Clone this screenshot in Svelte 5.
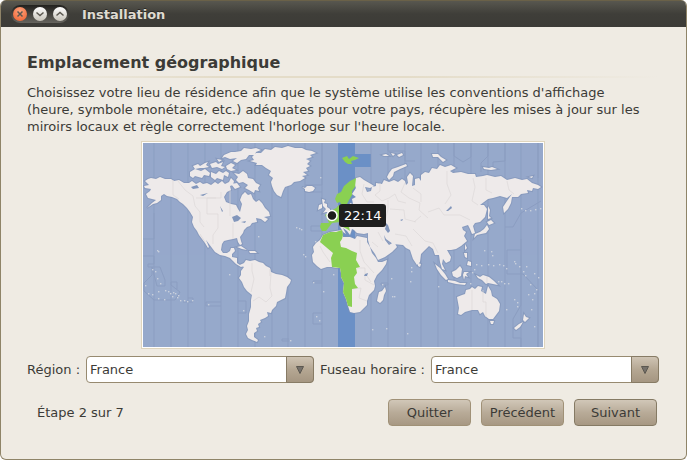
<script>
    let region = $state('France');
    let timezone = $state('France');
    let time = $state('22:14');

    const regions = ['France', 'Belgique', 'Suisse', 'Canada'];

    // timezone boundaries, one every 15 degrees
    const zoneLines = [11, 28, 45, 62, 78, 95, 112, 129, 145, 162, 179, 228, 245, 262, 278, 295, 311, 328, 345, 362, 378, 395];

    const zoneBoxes = [
        'M0 113H11V121H5V124H9V132L1 140V148L11 157H32L37 149L28 142V139H34V146',
        'M9 124L17 124L22 137V143H14Z',
        'M45 155H50V159H40',
        'M78 159H63V163H78',
        'M179 0V42H162',
        'M162 49H179',
        'M179 83H168V88H179',
        'M179 138H170V140H179',
        'M179 170H170V181H179',
        'M146 196H139V198H146',
        'M95 158H103V170H95',
        'M238 140H245V142H238Z',
        'M245 0V8H262V18H272',
        'M311 0V13L320 19L328 14V0',
        'M345 0V13L338 20V29',
        'M362 0V18L350 19V27',
        'M395 0V35M398 58L378 70L370 84H362',
        'M378 96L378 107H364V131H380L395 147V204',
        'M378 107V162L370 176V195H378V204',
        'M0 96H11V70'
    ];

    const land = [
        // North America
        'M2 38L5 36L8 35L13 36L17 34L22 36L28 36L31 38L36 37L41 40L46 40L49 38L53 41L57 39L60 41L64 40L68 42L72 39L75 41L79 38L82 41L86 39L88 35L91 38L90 42L87 43L88 47L84 49L81 54L83 59L88 61L93 62L95 66L97 69L98 65L99 61L97 57L99 52L102 49L105 52L108 51L110 56L113 59L116 57L119 60L122 65L126 69L127 73L121 74L125 76L122 79L118 76L113 75L114 79L109 80L107 83L104 84L101 87L100 90L97 94L98 98L99 101L97 102L95 99L94 95L90 96L85 97L81 98L79 101L78 107L80 110L84 110L87 108L88 105L91 105L92 108L89 111L89 114L94 115L94 120L97 122L101 121L101 123L98 124L93 121L90 118L87 115L82 113L77 112L72 109L69 105L66 101L63 97L66 104L65 105L62 100L59 96L56 92L54 88L51 84L49 79L50 74L47 69L44 65L40 61L37 59L34 56L29 54L24 53L21 51L18 53L18 57L14 60L10 61L4 65L9 60L13 57L9 56L5 55L3 51L7 48L8 46L2 45L1 43L6 42Z',
        // arctic islands
        'M92 9L98 8L101 5L108 6L113 5L118 7L113 9L112 12L106 12L103 16L98 17L94 20L90 18L94 15L87 16L82 14L79 15L81 12L88 9Z',
        'M91 30L96 31L100 28L104 31L105 35L110 36L113 40L117 42L115 45L116 48L112 47L111 50L106 47L102 45L105 42L100 39L96 40L93 37L95 34Z',
        'M47 29L52 26L58 28L62 26L67 30L66 33L61 32L59 35L52 33L50 35L47 33Z',
        'M68 29L73 31L76 28L80 30L83 28L86 30L85 34L81 32L80 37L74 35L72 37L68 34Z',
        'M50 23L55 21L57 23L62 20L65 19L63 22L66 24L61 25L57 25L52 26Z',
        'M67 21L73 19L75 21L80 19L78 23L82 24L79 26L74 24L69 25Z',
        'M83 23L88 20L92 22L89 25L93 27L88 28L84 26ZM74 16L79 17L76 19ZM88 41L94 40L97 44L92 46Z',
        // Greenland, Iceland
        'M107 18L111 17L109 14L113 10L118 10L122 6L128 7L132 4L139 5L145 3L152 5L159 5L163 7L169 8L173 10L167 12L169 14L163 16L167 18L164 21L167 23L163 25L165 28L160 29L164 32L159 33L162 35L157 38L151 39L148 42L142 44L140 48L138 54L134 52L131 48L129 43L128 39L130 35L126 32L128 28L123 25L119 22L113 22L114 20Z',
        'M159 44L162 45L164 43L169 43L172 45L170 48L166 49L162 48L162 46Z',
        // South America
        'M93 120L97 122L101 120L103 117L107 118L112 117L116 119L120 120L123 123L127 125L128 129L133 131L139 132L144 134L148 137L147 140L144 144L143 150L142 155L138 157L134 159L133 163L129 167L128 170L124 169L125 173L122 175L117 177L118 179L115 181L116 184L113 185L114 188L111 190L111 194L115 197L114 199L109 197L105 195L103 191L105 187L104 183L106 178L106 171L108 164L108 157L109 152L104 148L101 144L99 139L96 135L98 132L98 128L101 124Z',
        // Africa
        'M187 89L180 92L177 97L173 100L170 104L171 109L169 112L170 119L174 123L178 126L184 124L189 124L193 125L197 125L198 130L198 134L201 140L200 149L203 156L205 163L207 169L211 170L217 169L221 165L224 162L224 158L226 152L231 147L232 143L231 138L234 132L239 127L243 121L244 117L239 119L235 119L233 115L229 110L227 104L224 99L224 95L219 94L214 93L212 96L207 94L200 94L199 87Z',
        'M242 144L243 148L241 152L240 157L237 160L234 158L235 153L236 149L239 148Z',
        // Eurasia
        'M196 82L195 64L200 62L206 64L207 60L210 61L209 56L213 54L209 51L213 45L211 39L213 35L217 34L221 37L228 41L231 43L227 45L222 44L224 49L228 48L229 44L233 43L233 40L239 41L241 37L246 39L251 37L255 39L259 36L262 38L263 42L265 40L264 34L267 30L270 33L269 43L272 42L272 36L276 35L278 38L278 32L282 29L286 30L289 25L294 26L297 22L302 24L308 22L313 25L307 28L310 30L318 29L325 31L332 31L333 34L340 33L344 32L352 34L358 33L364 37L372 35L379 37L384 36L389 40L395 42L398 44L395 46L390 45L389 48L384 47L385 50L378 51L375 54L369 54L368 60L365 66L361 70L360 64L364 58L369 51L364 55L357 53L350 55L345 56L337 62L341 62L344 66L342 74L337 79L332 80L330 83L332 90L329 91L327 86L325 82L319 84L320 87L323 89L321 93L324 98L318 103L313 106L308 107L304 107L308 114L307 118L303 120L300 116L299 121L302 127L299 126L297 119L296 112L292 112L290 106L286 103L281 108L278 111L277 119L274 122L270 116L267 107L263 105L260 102L250 101L243 96L241 92L242 97L246 102L251 99L254 104L249 109L242 114L235 117L232 111L227 104L225 97L225 90L221 91L214 90L211 87L209 86L207 92L204 88L200 85L203 91L200 89Z',
        'M246 37L244 34L246 30L249 26L255 24L263 21L264 23L257 26L251 29L250 33Z',
        // islands around Asia
        'M345 63L347 67L346 73L348 75L345 76ZM344 79L348 77L351 80L346 82ZM344 82L346 86L343 90L338 91L334 92L331 95L332 91L337 89L341 86Z',
        'M275 120L278 121L277 124L275 123ZM322 101L324 105L322 107ZM321 110L324 110L324 115L322 114ZM325 118L328 119L328 123L324 122Z',
        'M292 121L297 125L302 131L305 136L303 137L298 132L294 126ZM305 137L312 138L317 140L323 140L322 142L313 141L305 139Z',
        'M309 129L313 127L317 123L319 126L318 133L314 135L310 133ZM321 129L326 129L323 131L325 134L322 133L321 137L320 132Z',
        'M333 132L337 134L340 132L346 134L351 138L355 142L350 141L345 140L343 141L339 137L335 135Z',
        // Australia, New Zealand
        'M314 154L319 152L322 151L323 147L327 146L329 144L332 146L335 143L339 144L338 148L343 151L345 143L348 148L349 153L354 156L357 161L356 168L350 176L346 176L342 173L340 169L337 171L335 167L329 167L322 169L318 172L315 171L316 165Z',
        'M347 178L351 178L350 181L348 181ZM381 171L383 174L386 175L382 179L380 177ZM380 179L377 184L373 187L371 185L376 181Z',
        // British isles, islands of the Atlantic and the Arctic
        'M179 56L182 57L181 60L184 61L184 64L187 66L187 69L183 69L180 70L183 66L180 63ZM176 62L179 61L179 65L175 67Z',
        'M94 104L98 103L104 107L99 106ZM106 108L112 108L114 110L107 110Z',
        'M239 12L243 11L246 13L241 13ZM248 10L252 11L250 13ZM254 12L259 10L260 12L256 14ZM289 11L295 11L298 14L303 17L300 19L295 14L290 14ZM340 24L346 25L349 24L354 26L348 27L341 26ZM386 34L390 33L389 35Z'
    ];

    const zoneLand = [
        'M180 92L187 89L193 89L199 87L200 92L199 96L197 99L198 104L203 105L209 108L214 110L213 117L217 124L213 125L214 130L211 134L212 141L215 145L209 146L209 164L205 163L203 156L200 149L201 140L198 134L198 130L197 125L189 124L188 115L190 110L177 99Z',
        'M213 35L212 44L209 48L209 52L206 57L204 61L199 63L197 59L194 60L192 56L194 51L198 49L201 43L207 38Z',
        'M178 80L186 80L184 75L182 72L188 68L193 65L196 62L201 63V78L197 79L189 80L186 84L183 88L179 88L177 84Z',
        'M199 15L204 13L206 16L210 13L216 15L212 17L208 18L209 21L205 21L202 19ZM200 84L206 84L207 88L204 86Z'
    ];

    const lakes = [
        'M48 44L54 42L56 45L50 46ZM57 52L65 50L60 53ZM77 63L80 68L79 69ZM89 74L94 72L98 75L95 78L91 79ZM98 79L103 78L102 80ZM242 79L245 82L247 88L245 90L242 86L243 83ZM257 77L260 76L259 78ZM303 68L308 63L309 65L305 68ZM222 131L225 130L224 133L221 133Z'
    ];

    const borders = [
        'M30 37V52L36 56M35 38L42 47L50 53L52 63L57 69V79L61 84',
        'M53 55H78V49M73 55H64V71H75V85L70 92V101M87 47V73M90 80V96M57 91L62 99',
        'M109 120V128L111 136L108 149M128 130L127 145L129 153L123 159L116 154L110 158M127 126V133',
        'M221 41L219 51L224 59H231M237 40V48L232 52L239 58L246 55L252 51L255 58L263 60M245 57V66L242 78M262 40L258 49L266 55L277 60L276 67L285 75M270 45L278 51V59',
        'M304 28V41L308 52L302 61M330 35L332 44L329 58L335 62M343 35V47L349 50M364 38L366 47L371 51M247 66L261 67L262 76L273 79M285 69L296 65L301 72H317L327 77M252 91L263 93L269 103M270 86L282 98L290 100L295 110M278 73L271 79',
        'M217 97V108L221 119L231 130M229 99L235 104M214 125H222V137L231 142M209 146L218 145L216 155L224 158M177 103L180 109L187 119M224 133L228 139M235 89L240 98',
        'M329 147V167M340 147V159H343V174M344 134V140'
    ];

    const islets = [
        [14, 107], [15, 108], [9, 126], [12, 128], [14, 135], [17, 140], [2, 142], [5, 150], [9, 151], [15, 148], [15, 155], [22, 147], [25, 148], [27, 150], [30, 149],
        [29, 153], [32, 150], [35, 152], [34, 154], [37, 157], [21, 156], [41, 157], [44, 158], [49, 157], [65, 161], [86, 131], [100, 167], [115, 93], [153, 84], [156, 85],
        [158, 86], [160, 111], [162, 113], [170, 139], [180, 148], [173, 173], [176, 177], [147, 197], [121, 193], [172, 98], [229, 186], [243, 185], [264, 190], [248, 135],
        [249, 153], [251, 153], [268, 124], [268, 128], [267, 138], [295, 143], [177, 34], [341, 107], [348, 108], [349, 112], [345, 121], [350, 122], [356, 121], [360, 122],
        [363, 125], [371, 118], [372, 120], [376, 123], [383, 123], [380, 128], [382, 132], [391, 130], [395, 134], [387, 141], [393, 146], [391, 150], [385, 151],
        [389, 156], [371, 156], [374, 159], [363, 166], [388, 166], [374, 163], [391, 183], [378, 65], [382, 67], [387, 67], [392, 66], [397, 65], [329, 129],
        [331, 126], [333, 121], [338, 122], [327, 140], [358, 138], [361, 140], [190, 131], [239, 141], [365, 140], [355, 138]
    ];
</script>

<main class="window">
    <header class="titlebar">
        <div class="controls">
            <button class="control close" type="button" aria-label="Fermer">
                <svg viewBox="0 0 14 14"><path d="M4.5 4.5L9.5 9.5M9.5 4.5L4.5 9.5" /></svg>
            </button>
            <button class="control" type="button" aria-label="Réduire">
                <svg viewBox="0 0 14 14"><path d="M3.5 5.5L7 8.5L10.5 5.5" /></svg>
            </button>
            <button class="control" type="button" aria-label="Agrandir">
                <svg viewBox="0 0 14 14"><path d="M3.5 8.5L7 5.5L10.5 8.5" /></svg>
            </button>
        </div>
        <span class="title">Installation</span>
    </header>

    <section class="content">
        <h1>Emplacement géographique</h1>
        <hr />
        <p class="intro">
            Choisissez votre lieu de résidence afin que le système utilise les conventions d'affichage
            (heure, symbole monétaire, etc.) adéquates pour votre pays, récupère les mises à jour sur les
            miroirs locaux et règle correctement l'horloge sur l'heure locale.
        </p>

        <div class="map">
            <svg viewBox="0 0 400 204" role="img" aria-label="Carte des fuseaux horaires">
                <rect class="sea" width="400" height="204" />
                <path class="zone" d="M195 0H212V11H228V24H212V204H195Z" />
                <g class="lines">
                    {#each zoneLines as x}
                        <path d="M{x} 0V204" />
                    {/each}
                    {#each zoneBoxes as d}
                        <path {d} />
                    {/each}
                </g>
                <g class="shadow">
                    {#each land as d}
                        <path {d} />
                    {/each}
                </g>
                <g class="land">
                    {#each land as d}
                        <path {d} />
                    {/each}
                    {#each islets as [x, y]}
                        <rect class="islet" {x} {y} width="1.4" height="1.4" />
                    {/each}
                </g>
                <g class="borders">
                    {#each borders as d}
                        <path {d} />
                    {/each}
                </g>
                <g class="lakes">
                    {#each lakes as d}
                        <path {d} />
                    {/each}
                </g>
                <g class="zone-land">
                    {#each zoneLand as d}
                        <path {d} />
                    {/each}
                </g>
                <circle class="pin" cx="189" cy="72.5" r="5" />
            </svg>
            <span class="clock">{time}</span>
        </div>

        <div class="fields">
            <label for="region">Région :</label>
            <div class="combo">
                <select id="region" bind:value={region}>
                    {#each regions as name}
                        <option>{name}</option>
                    {/each}
                </select>
                <span class="arrow"><svg viewBox="0 0 8 8"><path d="M0.5 0.5H7.5L4 7.5Z" /></svg></span>
            </div>
            <label for="timezone">Fuseau horaire :</label>
            <div class="combo">
                <select id="timezone" bind:value={timezone}>
                    {#each regions as name}
                        <option>{name}</option>
                    {/each}
                </select>
                <span class="arrow"><svg viewBox="0 0 8 8"><path d="M0.5 0.5H7.5L4 7.5Z" /></svg></span>
            </div>
        </div>

        <footer>
            <span class="step">Étape 2 sur 7</span>
            <button class="btn" type="button">Quitter</button>
            <button class="btn" type="button">Précédent</button>
            <button class="btn default" type="button">Suivant</button>
        </footer>
    </section>
</main>

<style>
    :global(body) { background: #fff; }
    * { box-sizing: border-box; }

    .window {
        border: 1px solid #8f8468;
        border-top: none;
        border-radius: 6px;
        background: #efebe3;
        color: #3c3b37;
        font-family: "DejaVu Sans", sans-serif;
        font-size: 13px;
        line-height: 17px;
        overflow: hidden;
    }

    .titlebar {
        display: flex;
        align-items: center;
        gap: 13px;
        height: 27px;
        padding: 0 10px;
        border-top: 1px solid #6a6148;
        background: linear-gradient(#58574f, #3f3e39 50%, #3c3b37);
    }
    .title { color: #dfdbd2; font-weight: bold; text-shadow: 0 -1px #2a2926; }
    .controls {
        display: flex;
        gap: 6px;
        padding: 2px;
        border-radius: 9px;
        background: linear-gradient(#22211e, #66645e);
    }
    .control {
        display: flex;
        width: 14px;
        height: 14px;
        padding: 0;
        border: none;
        border-radius: 50%;
        background: linear-gradient(#ffffff, #c9c5bb);
    }
    .close { background: radial-gradient(circle at 50% 30%, #ffa27c, #ec5d2c); }
    .control svg { width: 14px; height: 14px; fill: none; stroke: #5c5850; stroke-width: 1.5; }

    .content { padding: 26px 27px 33px 26px; }
    h1 { margin: 0; font-size: 16px; line-height: 20px; }
    hr {
        height: 2px;
        margin: 3px 0 6px;
        border: none;
        background: linear-gradient(90deg, transparent, #e4dcc8 30%, #e4dcc8 60%, transparent);
    }
    .intro { margin: 0; max-width: 620px; }

    .map {
        position: relative;
        width: 404px;
        max-width: 100%;
        margin: 6px auto 7px;
        border: 1px solid #dfd5bd;
        padding: 1px;
        background: #fff;
    }
    .map svg { display: block; width: 100%; }
    .sea { fill: #96a9cb; }
    .zone { fill: #6b90c6; }
    .lines { fill: none; stroke: #8799bd; stroke-width: 1; opacity: 0.7; }
    .shadow { fill: none; stroke: #7f92b6; stroke-width: 2; opacity: 0.6; }
    .land { fill: #eeeaea; }
    .islet { fill: #c9d0dc; }
    .borders { fill: none; stroke: #dcd8d8; stroke-width: 0.7; }
    .lakes { fill: #8296bb; }
    .zone-land { fill: #8ad052; }
    .pin { fill: #1e1e1e; stroke: #fff; stroke-width: 1.5; }
    .clock {
        position: absolute;
        left: 49%;
        top: 30%;
        padding: 3px 5px;
        border-radius: 3px;
        background: #1e1e1e;
        color: #fff;
    }

    .fields { display: flex; align-items: center; gap: 6px; }
    .combo { display: grid; flex: 1; }
    select {
        grid-area: 1 / 1;
        width: 100%;
        height: 27px;
        padding: 0 30px 0 3px;
        border: 1px solid #978a70;
        border-radius: 4px;
        background: #fff;
        color: #3c3b37;
        font: inherit;
        appearance: none;
    }
    .arrow {
        grid-area: 1 / 1;
        display: flex;
        align-items: center;
        justify-content: center;
        justify-self: end;
        width: 28px;
        border: 1px solid #877b65;
        border-radius: 0 4px 4px 0;
        background: linear-gradient(#cfc4b4, #b5a793 50%, #a59681);
        pointer-events: none;
    }
    .arrow svg { width: 8px; height: 8px; fill: #75706a; stroke: #5c5850; stroke-width: 1; }

    footer { display: flex; align-items: center; gap: 10px; padding: 16px 2px 0 10px; }
    .step { flex: 1; }
    .btn {
        width: 83px;
        height: 27px;
        padding: 0;
        border: 1px solid #a09177;
        border-radius: 4px;
        background: linear-gradient(#d1c7b8, #b8ab98 50%, #a79883);
        color: #3c3b37;
        font: inherit;
    }
    .default { border-color: #857a64; }
</style>
